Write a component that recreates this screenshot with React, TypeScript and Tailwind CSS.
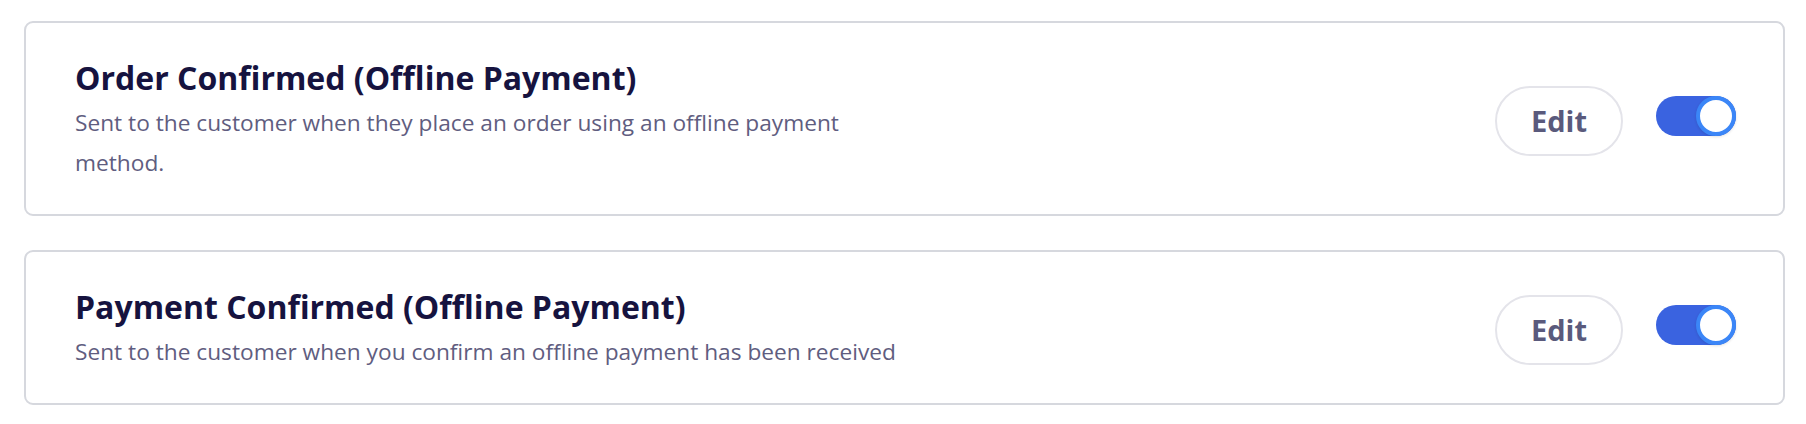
import React, { useState } from "react";

const NOTIFICATIONS = [
  {
    id: "order-offline",
    title: "Order Confirmed (Offline Payment)",
    desc: "Sent to the customer when they place an order using an offline payment method.",
  },
  {
    id: "payment-offline",
    title: "Payment Confirmed (Offline Payment)",
    desc: "Sent to the customer when you confirm an offline payment has been received",
  },
];

function Toggle({ on, onChange }: { on: boolean; onChange: () => void }) {
  return (
    <button
      onClick={onChange}
      className={`relative w-[80px] h-[40px] mb-[9px] rounded-full flex items-center shrink-0 ${on ? "bg-[#3a63e0] justify-end" : "bg-[#d4d6dd] justify-start"}`}
    >
      <span className="w-[40px] h-[40px] rounded-full bg-white border-[4px] border-[#3b86f7] shadow-[0_1px_3px_rgba(0,0,0,0.12)]" />
    </button>
  );
}

export default function App() {
  const [enabled, setEnabled] = useState<Record<string, boolean>>({
    "order-offline": true,
    "payment-offline": true,
  });

  return (
    <div className="min-h-screen bg-white pl-[24px] pr-[21px] pt-[21px] font-['Open_Sans',sans-serif]">
      <div className="flex flex-col gap-[34px]">
        {NOTIFICATIONS.map((n) => (
          <div
            key={n.id}
            className="flex items-center justify-between border-2 border-[#d6d8de] rounded-[9px] pl-[49px] pr-[47px] pt-[35px] pb-[31px]"
          >
            <div className="flex flex-col gap-[5px]">
              <div className="text-[32px] leading-[40px] font-bold text-[#16133f]">{n.title}</div>
              <div className="text-[22.7px] leading-[40px] text-[#5f5d80] max-w-[835px]">{n.desc}</div>
            </div>
            <div className="flex items-center gap-[33px]">
              <button className="w-[128px] h-[70px] rounded-full border-2 border-[#e4e4ea] bg-white text-[29px] font-bold text-[#5a5a7c]">
                Edit
              </button>
              <Toggle
                on={enabled[n.id]}
                onChange={() => setEnabled({ ...enabled, [n.id]: !enabled[n.id] })}
              />
            </div>
          </div>
        ))}
      </div>
    </div>
  );
}
